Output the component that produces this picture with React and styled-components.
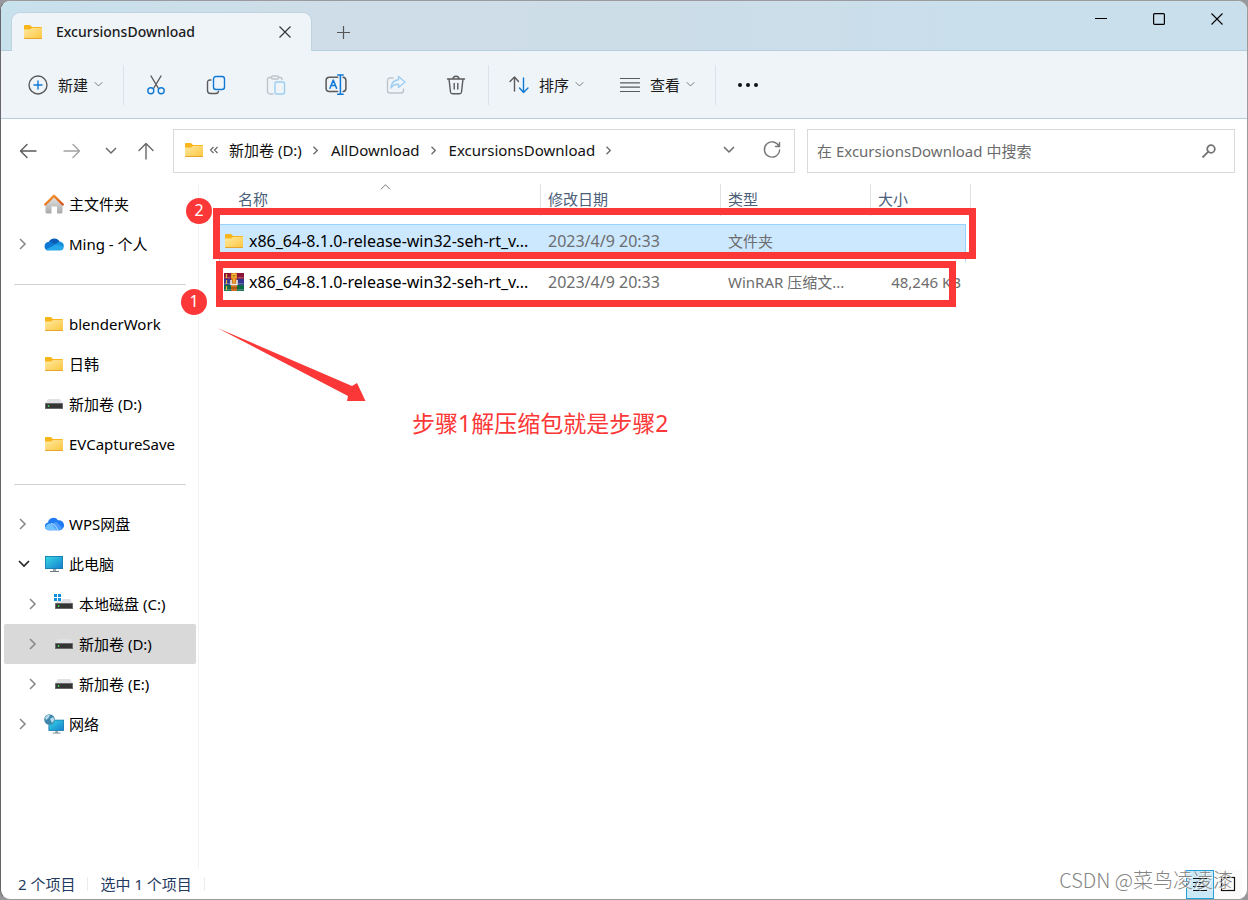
import React from 'react'
import styled, { createGlobalStyle } from 'styled-components'

const GlobalStyle = createGlobalStyle`
    * { box-sizing: border-box; }
    body {
        margin: 0;
        background: #97979b;
        font-family: "Noto Sans", "Noto Sans CJK SC", sans-serif;
        font-size: 15px;
        line-height: 20px;
        color: #000;
    }
    button, input {
        font: inherit;
        color: inherit;
    }
    svg {
        display: block;
        flex: none;
    }
`;

const Window = styled.div`
    display: flex;
    flex-direction: column;
    position: relative;
    min-height: 100vh;
    overflow: hidden;
    background: #fff;
    border: 1px solid #9b9b9e;
    border-left-color: #66666a;
    border-radius: 10px;
`;

const TitleBar = styled.header`
    display: flex;
    height: 50px;
    padding: 0 1px 0 10px;
    background: linear-gradient(90deg, #c7e1ed 0%, #cfdde8 28%, #cddde8 50%, #c9dfec 80%);
    box-shadow: inset 0 -1px #b5cfe0;
`;

const Tab = styled.div`
    display: flex;
    align-items: center;
    width: 301px;
    height: 39px;
    margin-top: 11px;
    padding: 0 9px 0 11px;
    background: #eff4f9;
    border: 1px solid #bfd3e0;
    border-bottom: 0;
    border-radius: 9px 9px 0 0;
`;

const TabTitle = styled.span`
    flex: 1;
    margin-left: 13px;
    font-size: 14px;
    font-weight: 500;
    color: #1b1b1b;
`;

const IconButton = styled.button`
    display: flex;
    align-items: center;
    justify-content: center;
    width: ${p => p.$width}px;
    height: ${p => p.$height || 36}px;
    padding: 0;
    border: 0;
    background: none;
`;

const NewTab = styled.div`
    flex: 1;
    padding: 13px 0 0 13px;
`;

const Toolbar = styled.div`
    display: flex;
    align-items: center;
    height: 68px;
    padding-left: 9px;
    background: #eff4f9;
    border-bottom: 1px solid #b9cddb;
`;

const MenuButton = styled.button`
    display: flex;
    align-items: center;
    height: 40px;
    padding: 0 18px;
    border: 0;
    background: none;
    color: #1b1b1b;
`;

const MenuLabel = styled.span`
    margin: 0 6px 0 10px;
`;

const Separator = styled.span`
    width: 1px;
    height: 40px;
    margin: 0 2px;
    background: #dde3e9;
`;

const NavBar = styled.div`
    display: flex;
    align-items: center;
    padding: 10px 12px 11px 5px;
`;

const Address = styled.nav`
    display: flex;
    flex: 1;
    align-items: center;
    height: 44px;
    margin: 0 12px 0 9px;
    padding: 0 1px 2px 10px;
    border: 1px solid #d9d9d9;
`;

const Crumbs = styled.div`
    display: flex;
    flex: 1;
    align-items: center;
    gap: 10px;
    margin-left: 4px;
`;

const Crumb = styled.a`
    color: #111;
    text-decoration: none;
    white-space: nowrap;
`;

const SearchBox = styled.label`
    display: flex;
    flex: 0 1 428px;
    align-items: center;
    height: 44px;
    padding: 0 17px 0 9px;
    border: 1px solid #d9d9d9;
`;

const SearchInput = styled.input`
    flex: 1;
    min-width: 0;
    padding: 0;
    border: 0;
    outline: 0;
    background: none;
    &::placeholder {
        color: #6b6b6b;
        opacity: 1;
    }
`;

const Body = styled.div`
    display: flex;
    flex: 1;
    position: relative;
`;

const Sidebar = styled.nav`
    flex: 0 0 198px;
    padding: 0 2px 0 3px;
    border-right: 1px solid #f2f2f2;
`;

const TreeItem = styled.a`
    display: flex;
    align-items: center;
    height: 40px;
    padding-left: ${p => (p.$nested ? 24 : 14)}px;
    border-radius: 2px;
    background: ${p => (p.$selected ? '#d9d9d9' : 'transparent')};
    color: #000;
    text-decoration: none;
    white-space: nowrap;
`;

const Toggle = styled.span`
    width: 10px;
    margin-right: 16px;
`;

const TreeLabel = styled.span`
    margin-left: 5px;
`;

const Divider = styled.hr`
    height: 1px;
    margin: 20px 10px 19px;
    border: 0;
    background: #d3d3d3;
`;

const Files = styled.main`
    flex: 1;
    padding-left: 20px;
`;

const Table = styled.table`
    width: 752px;
    table-layout: fixed;
    border-collapse: separate;
    border-spacing: 0;
`;

const Th = styled.th`
    position: relative;
    padding: 0 0 8px;
    font-weight: 400;
    text-align: left;
    color: #4c607a;
`;

const HeadCell = styled.div`
    height: 32px;
    padding: 5px 0 0 ${p => (p.$first ? 19 : 7)}px;
    border-right: 1px solid #e2e2e2;
`;

const SortMark = styled.span`
    position: absolute;
    top: -2px;
    left: 50%;
`;

const Tr = styled.tr`
    --line: ${p => (p.$selected ? '#99d1ff' : 'transparent')};
    --fill: ${p => (p.$selected ? '#cce8ff' : 'transparent')};
`;

// the transparent bottom border leaves a gap under the selection
const Td = styled.td`
    height: 41px;
    padding: 0 5px 2px 7px;
    border: 0 solid var(--line);
    border-top-width: 1px;
    border-bottom: 6px solid transparent;
    background: var(--fill);
    background-clip: padding-box;
    color: #6d6d6d;
    font-size: ${p => (p.$large ? 16 : 15)}px;
    white-space: nowrap;
    text-align: ${p => (p.$right ? 'right' : 'left')};
`;

const NameTd = styled(Td)`
    padding-left: 4px;
    border-left-width: 1px;
    color: #000;
`;

const SizeTd = styled(Td)`
    padding-right: 4px;
    border-right-width: 1px;
`;

const FileName = styled.div`
    display: flex;
    align-items: center;
    gap: 5px;
`;

const StatusBar = styled.footer`
    display: flex;
    align-items: center;
    height: 30px;
    padding: 0 5px 0 17px;
    color: #1f3a5f;
`;

const StatusText = styled.span`
    padding-right: 12px;
    margin-right: 12px;
    border-right: 1px solid #ececec;
    line-height: 14px;
`;

const ViewSwitch = styled.div`
    display: flex;
    margin-left: auto;
`;

const ViewButton = styled.button`
    display: flex;
    align-items: center;
    justify-content: center;
    width: 28px;
    height: 29px;
    padding: 0;
    border: 1px solid ${p => (p.$active ? '#26a0da' : 'transparent')};
    background: ${p => (p.$active ? '#cbe8f6' : '#fbfbfb')};
`;

const Frame = styled.div`
    position: absolute;
    top: ${p => p.$top}px;
    left: ${p => p.$left}px;
    width: ${p => p.$width}px;
    height: ${p => p.$height}px;
    border: 7px solid #fc3737;
`;

const Badge = styled.span`
    position: absolute;
    top: ${p => p.$top}px;
    left: ${p => p.$left}px;
    width: 26px;
    height: 26px;
    border-radius: 50%;
    background: #fc3737;
    color: #fff;
    font-size: 16px;
    line-height: 24px;
    text-align: center;
`;

const Arrow = styled.svg`
    position: absolute;
    top: 142px;
    left: 215px;
`;

const Note = styled.p`
    position: absolute;
    top: 223px;
    left: 411px;
    margin: 0;
    font-size: 23px;
    line-height: 32px;
    color: #fc3737;
`;

const Watermark = styled.span`
    position: absolute;
    right: 14px;
    bottom: 5px;
    font-family: "Noto Sans CJK SC", sans-serif;
    font-size: 20px;
    font-weight: 300;
    line-height: 28px;
    color: #858585;
    text-shadow: 1px 1px #fff;
    pointer-events: none;
`;

const chevrons = {
    right: 'M2 1l5 5-5 5',
    down: 'M1 3l5 5 5-5',
    up: 'M1 8l5-5 5 5',
}

const Chevron = ({ dir = 'right', size = 12, color = '#6b6b6b', width = 1.3 }) => (
    <svg width={size} height={size} viewBox="0 0 12 12" fill="none" stroke={color} strokeWidth={width}>
        <path d={chevrons[dir]}/>
    </svg>
)

const Line = ({ size = 20, color = '#5a5a5a', width = 1.4, children }) => (
    <svg width={size} height={size} viewBox="0 0 20 20" fill="none" stroke={color} strokeWidth={width} strokeLinecap="round" strokeLinejoin="round">
        {children}
    </svg>
)

const Cross = ({ color }) => (
    <svg width="12" height="12" viewBox="0 0 12 12" stroke={color} strokeWidth="1.1">
        <path d="M.5.5l11 11M11.5.5l-11 11"/>
    </svg>
)

const Folder = () => (
    <svg width="20" height="20" viewBox="0 0 20 20">
        <defs>
            <linearGradient id="folder" x1="0" y1="0" x2="1" y2="1">
                <stop offset="0" stopColor="#ffe9a3"/>
                <stop offset="1" stopColor="#fcc63d"/>
            </linearGradient>
        </defs>
        <path d="M1 4q0-1 1-1h5l2 2h9q1 0 1 1v4H1z" fill="#f8b61c"/>
        <path d="M1 7.6h6L9 6h10v10q0 1-1 1H2q-1 0-1-1z" fill="url(#folder)"/>
        <path d="M1 16h18q0 1-1 1H2q-1 0-1-1z" fill="#e5a52d"/>
    </svg>
)

const Drive = ({ system }) => (
    <svg width="20" height="20" viewBox="0 0 20 20">
        <path d="M4 5h12l3 5H1z" fill="#dfe1e4"/>
        <rect x="1" y="9" width="18" height="6" rx=".6" fill="#6a6a6a"/>
        <rect x="2" y="10" width="16" height="4" fill="#353535"/>
        <circle cx="4.6" cy="12" r=".9" fill="#3fe05c"/>
        {system && (
            <g>
                <rect x="-1" y="-1" width="9" height="8" fill="#fff"/>
                <path d="M0 0h3v3H0zM4 0h3v3H4zM0 4h3v3H0zM4 4h3v3H4z" fill="#0f8fe0"/>
            </g>
        )}
    </svg>
)

const Home = () => (
    <svg width="20" height="20" viewBox="0 0 20 20">
        <defs>
            <linearGradient id="wall" x1="0" y1="0" x2="0" y2="1">
                <stop offset="0" stopColor="#e6e6e6"/>
                <stop offset="1" stopColor="#a9a9a9"/>
            </linearGradient>
            <linearGradient id="roof" x1="0" y1="0" x2="1" y2="1">
                <stop offset="0" stopColor="#f8a12b"/>
                <stop offset="1" stopColor="#d8531b"/>
            </linearGradient>
        </defs>
        <path d="M10 2l8.5 8.5V18q0 1.500-1.500 1.500h-4v-7H7.500v7H3Q1.500 19.500 1.500 18v-7.500z" fill="url(#wall)"/>
        <path d="M1.200 10.500L10 1.800l8.800 8.700" fill="none" stroke="url(#roof)" strokeWidth="2.400" strokeLinecap="round" strokeLinejoin="round"/>
    </svg>
)

const OneDrive = () => (
    <svg width="20" height="20" viewBox="0 0 20 20">
        <path d="M4.500 8.500a6 6 0 0 1 11-.9l-5 6.400z" fill="#0a5cb4"/>
        <path d="M4.500 8a4.300 4.300 0 0 0-.5 8.500l9-4.500-4-2.700A6 6 0 0 0 4.500 8z" fill="#0f78d4"/>
        <path d="M10 10.500l5.500-3a4.500 4.500 0 0 1 4.300 5L16 15z" fill="#1490df"/>
        <path d="M1.700 15.500L11 11q2-.8 4 .3l4.800 1.500q0 3.700-3.800 3.700H4q-1.500 0-2.300-1z" fill="#28a8ea"/>
    </svg>
)

const WpsCloud = () => (
    <svg width="20" height="20" viewBox="0 0 20 20">
        <path d="M4 8.500A5.500 5.500 0 0 1 14 6.300a5 5 0 0 1 2 9.900H4.500A3.900 3.900 0 0 1 4 8.500z" fill="#1f7bf4"/>
        <path d="M1 13.500q4-7 9-1.500l3.500 4.200h-9q-3 0-3.500-2.700z" fill="#6fc0ff"/>
        <path d="M8.500 10.500Q12 6 14.500 10l4 4.500q-1 1.700-3 1.700h-2q-2.500-1-5-5.700z" fill="#4a9bff"/>
        <path d="M7 9.500q4 0 7 6.700" fill="none" stroke="#d5ecff" strokeWidth=".8"/>
    </svg>
)

const Screen = () => (
    <>
        <path d="M9 15h3v2.500H9z" fill="#9aa5ad"/>
        <path d="M6 17h9v1H6z" fill="#6c7780"/>
        <rect x="1" y="2" width="18" height="13" fill="#1779ab"/>
        <rect x="1.800" y="2.800" width="16.400" height="11.400" fill="url(#screen)"/>
    </>
)

const ScreenFill = () => (
    <defs>
        <linearGradient id="screen" x1="0" y1="0" x2="1" y2="1">
            <stop offset="0" stopColor="#37d6e4"/>
            <stop offset="1" stopColor="#1680cf"/>
        </linearGradient>
    </defs>
)

const Pc = () => (
    <svg width="20" height="20" viewBox="0 0 20 20">
        <ScreenFill/>
        <Screen/>
    </svg>
)

const Network = () => (
    <svg width="20" height="20" viewBox="0 0 20 20">
        <ScreenFill/>
        <g transform="translate(3.600 4) scale(.86)"><Screen/></g>
        <circle cx="5.500" cy="5.500" r="5.300" fill="#3f88ad"/>
        <path d="M1 3.500Q4 0 6 1L4.500 4 2 6zM6 5l3-2 1.500 3L8 9z" fill="#b8dcea"/>
    </svg>
)

const Archive = () => (
    <svg width="20" height="20" viewBox="0 0 20 20">
        <rect y="1" width="20" height="6" fill="#8d1436"/>
        <rect y="7" width="20" height="6" fill="#34358c"/>
        <rect y="13" width="20" height="6" fill="#0c6b46"/>
        <path d="M13.500 5.800h6M13.500 11.800h6M13.500 17.800h6M.5 5.800h6M.5 11.800h6M.5 17.800h6" stroke="#cfc8d8" strokeWidth=".5"/>
        <path d="M2.500 2v4M2.500 8v4M2.500 14v4" stroke="#e7b43c" strokeWidth="1.200"/>
        <rect x="7" y="1" width="6" height="18" fill="#c9701f"/>
        <path d="M7.500 2.500Q10 0 12.500 2.500V6h-5z" fill="#ffc03e"/>
        <path d="M8.500 3.500h3M8.500 5h3" stroke="#9a4f0e" strokeWidth=".7"/>
        <path d="M7 8v4.500h6V8" fill="none" stroke="#ececec" strokeWidth="1.600"/>
        <path d="M10 6v5" stroke="#f0a030" strokeWidth="2.400"/>
        <path d="M7 16h6" stroke="#8a3f10" strokeWidth=".8"/>
    </svg>
)

const blue = '#0f7ad5'

const tools = [
    ['剪切', (
        <Line>
            <path d="M5 1l7.500 12.500M15 1L7.500 13.500"/>
            <circle cx="4.800" cy="15.700" r="3" stroke={blue}/>
            <circle cx="15.200" cy="15.700" r="3" stroke={blue}/>
        </Line>
    )],
    ['复制', (
        <Line>
            <path d="M5 5H4Q1.500 5 1.500 7.500v8Q1.500 18.500 4.500 18.500h5.500q2 0 2.500-2"/>
            <rect x="7.500" y="1.500" width="11" height="13" rx="2.500" stroke={blue}/>
        </Line>
    )],
    ['粘贴', (
        <Line color="#bfc4c9">
            <path d="M7 19H4Q1.500 19 1.500 16.500V4.500Q1.500 2.500 3.500 2.500H5M12.500 2.500H14q2 0 2 2"/>
            <rect x="5.500" y="1" width="7" height="3" rx="1.200"/>
            <rect x="9" y="7" width="9.500" height="12" rx="1.500" stroke="#9ccdf1"/>
        </Line>
    )],
    ['重命名', (
        <Line size={22}>
            <path d="M11.500 3H4Q1 3 1 6v7q0 3 3 3h7.500M16.500 3q2.500.2 2.500 3v7q0 2.800-2.500 3"/>
            <path d="M4.500 13L7.500 5.500l3 7.500M5.500 10.500h4" stroke={blue}/>
            <path d="M11.500 1h5M11.500 18.500h5M14 1v17.500" stroke={blue}/>
        </Line>
    )],
    ['共享', (
        <Line color="#bfc4c9">
            <path d="M7 3H4Q1.500 3 1.500 5.500v10Q1.500 18 4 18h11q2.500 0 2.500-2.500V14"/>
            <path d="M12.500 1.500L19 7l-6.500 5.500V9.300Q7.500 9 5 13 5.500 5.500 12.500 4.800z" stroke="#9ccdf1"/>
        </Line>
    )],
    ['删除', (
        <Line>
            <path d="M1.500 4h17M7 4q0-2.800 3-2.800T13 4M3 4l1.500 13q.2 1.800 2 1.800h7q1.800 0 2-1.800L17 4M8.200 8.500v5.500M11.800 8.500v5.500"/>
        </Line>
    )],
]

const tree = [
    { label: '主文件夹', icon: <Home/> },
    { label: 'Ming - 个人', icon: <OneDrive/>, toggle: 'right' },
    null,
    { label: 'blenderWork', icon: <Folder/> },
    { label: '日韩', icon: <Folder/> },
    { label: '新加卷 (D:)', icon: <Drive/> },
    { label: 'EVCaptureSave', icon: <Folder/> },
    null,
    { label: 'WPS网盘', icon: <WpsCloud/>, toggle: 'right' },
    { label: '此电脑', icon: <Pc/>, toggle: 'down' },
    { label: '本地磁盘 (C:)', icon: <Drive system/>, toggle: 'right', nested: true },
    { label: '新加卷 (D:)', icon: <Drive/>, toggle: 'right', nested: true, selected: true },
    { label: '新加卷 (E:)', icon: <Drive/>, toggle: 'right', nested: true },
    { label: '网络', icon: <Network/>, toggle: 'right' },
]

const files = [
    { icon: <Folder/>, name: 'x86_64-8.1.0-release-win32-seh-rt_v...', date: '2023/4/9 20:33', type: '文件夹', size: '', selected: true },
    { icon: <Archive/>, name: 'x86_64-8.1.0-release-win32-seh-rt_v...', date: '2023/4/9 20:33', type: 'WinRAR 压缩文...', size: '48,246 KB' },
]

const Menu = ({ icon, label }) => (
    <MenuButton>
        {icon}
        <MenuLabel>{label}</MenuLabel>
        <Chevron dir="down" size={9} color="#777"/>
    </MenuButton>
)

export default () => {
    return (
        <Window>
            <GlobalStyle/>
            <TitleBar>
                <Tab>
                    <Folder/>
                    <TabTitle>ExcursionsDownload</TabTitle>
                    <IconButton $width={34} aria-label="关闭标签页"><Cross color="#333"/></IconButton>
                </Tab>
                <NewTab>
                    <IconButton $width={36} aria-label="新标签页">
                        <svg width="13" height="13" viewBox="0 0 13 13" stroke="#555" strokeWidth="1.200"><path d="M0 6.500h13M6.500 0v13"/></svg>
                    </IconButton>
                </NewTab>
                <IconButton $width={58} aria-label="最小化">
                    <svg width="12" height="12" viewBox="0 0 12 12" stroke="#000"><path d="M0 5.500h12"/></svg>
                </IconButton>
                <IconButton $width={58} aria-label="最大化">
                    <svg width="12" height="12" viewBox="0 0 12 12" fill="none" stroke="#000" strokeWidth="1.200"><rect x=".6" y=".6" width="10.800" height="10.800" rx="1"/></svg>
                </IconButton>
                <IconButton $width={58} aria-label="关闭"><Cross color="#000"/></IconButton>
            </TitleBar>

            <Toolbar>
                <Menu label="新建" icon={<Line><circle cx="10" cy="10" r="9"/><path d="M10 6v8M6 10h8" stroke={blue}/></Line>}/>
                <Separator/>
                {tools.map(([label, icon]) => (
                    <IconButton key={label} $width={60} aria-label={label}>{icon}</IconButton>
                ))}
                <Separator/>
                <Menu label="排序" icon={<Line><path d="M5.500 16V2M1 6.500L5.500 2 9.500 6.500"/><path d="M14.500 3v14.500M10.500 13l4 4.500L19 13" stroke={blue}/></Line>}/>
                <Menu label="查看" icon={<Line width={1.2}><path d="M.5 3.500h19M.5 7.800h19M.5 12.200h19M.5 16.500h19"/></Line>}/>
                <Separator/>
                <IconButton $width={60} aria-label="更多">
                    <svg width="22" height="6" viewBox="0 0 22 6" fill="#111"><circle cx="3" cy="3" r="2"/><circle cx="11" cy="3" r="2"/><circle cx="19" cy="3" r="2"/></svg>
                </IconButton>
            </Toolbar>

            <NavBar>
                <IconButton $width={44} aria-label="后退"><Line><path d="M2.500 10h15.500M9 3.500L2.500 10 9 16.500"/></Line></IconButton>
                <IconButton $width={44} aria-label="前进"><Line color="#a3a3a3"><path d="M2 10h15.500M11 3.500l6.500 6.500-6.500 6.500"/></Line></IconButton>
                <IconButton $width={34} aria-label="最近位置"><Chevron dir="down" width={1.5}/></IconButton>
                <IconButton $width={36} aria-label="向上"><Line color="#666"><path d="M10 18V2.500M3 9.500l7-7 7 7"/></Line></IconButton>
                <Address aria-label="地址">
                    <Folder/>
                    <Crumbs>
                        <svg width="11" height="10" viewBox="0 0 11 10" fill="none" stroke="#666" strokeWidth="1.200"><path d="M5.500 2L2.500 5l3 3M9.500 2l-3 3 3 3"/></svg>
                        <Crumb href="#d">新加卷 (D:)</Crumb>
                        <Chevron size={9} width={1.8}/>
                        <Crumb href="#all">AllDownload</Crumb>
                        <Chevron size={9} width={1.8}/>
                        <Crumb href="#excursions">ExcursionsDownload</Crumb>
                        <Chevron size={9} width={1.8}/>
                    </Crumbs>
                    <IconButton $width={44} aria-label="历史记录"><Chevron dir="down" width={1.5}/></IconButton>
                    <IconButton $width={42} aria-label="刷新">
                        <Line color="#777"><path d="M17 6.500A7.600 7.600 0 1 0 17.600 10M17.500 2.500v4h-4"/></Line>
                    </IconButton>
                </Address>
                <SearchBox>
                    <SearchInput type="text" aria-label="搜索" placeholder="在 ExcursionsDownload 中搜索"/>
                    <svg width="16" height="16" viewBox="0 0 16 16" fill="none" stroke="#757575" strokeWidth="1.800"><circle cx="10" cy="6" r="3.800"/><path d="M7.300 8.700L1.500 14.500"/></svg>
                </SearchBox>
            </NavBar>

            <Body>
                <Sidebar aria-label="导航窗格">
                    {tree.map((item, i) => item ? (
                        <TreeItem key={i} href={'#item' + i} $nested={item.nested} $selected={item.selected}>
                            <Toggle>
                                {item.toggle && <Chevron dir={item.toggle} width={1.6} color={item.toggle === 'down' ? '#222' : '#8a8a8a'}/>}
                            </Toggle>
                            {item.icon}
                            <TreeLabel>{item.label}</TreeLabel>
                        </TreeItem>
                    ) : <Divider key={i}/>)}
                </Sidebar>
                <Files>
                    <Table>
                        <colgroup>
                            <col width="322"/>
                            <col width="180"/>
                            <col width="150"/>
                            <col width="95"/>
                            <col width="5"/>
                        </colgroup>
                        <thead>
                            <tr>
                                <Th>
                                    <HeadCell $first>名称</HeadCell>
                                    <SortMark><Chevron dir="up" size={11} width={1}/></SortMark>
                                </Th>
                                <Th><HeadCell>修改日期</HeadCell></Th>
                                <Th><HeadCell>类型</HeadCell></Th>
                                <Th colSpan={2}><HeadCell>大小</HeadCell></Th>
                            </tr>
                        </thead>
                        <tbody>
                            {files.map(file => (
                                <Tr key={file.type} $selected={file.selected}>
                                    <NameTd $large><FileName>{file.icon}{file.name}</FileName></NameTd>
                                    <Td $large>{file.date}</Td>
                                    <Td>{file.type}</Td>
                                    <SizeTd $right>{file.size}</SizeTd>
                                </Tr>
                            ))}
                        </tbody>
                    </Table>
                </Files>

                <Frame $top={24} $left={212} $width={763} $height={51}/>
                <Frame $top={77} $left={215} $width={740} $height={46}/>
                <Badge $top={14} $left={185}>2</Badge>
                <Badge $top={105} $left={180}>1</Badge>
                <Arrow width="150" height="78" viewBox="0 0 150 78" fill="#fc3737">
                    <path d="M1.500 2L136 60l5-3 8.500 18H131l1-5z"/>
                </Arrow>
                <Note>步骤1解压缩包就是步骤2</Note>
            </Body>

            <StatusBar>
                <StatusText>2 个项目</StatusText>
                <StatusText>选中 1 个项目</StatusText>
                <ViewSwitch>
                    <ViewButton $active aria-label="详细信息">
                        <svg width="16" height="16" viewBox="0 0 16 16" stroke="#111"><path d="M1 2.500h14M1 6.500h14M1 10.500h14M1 14.500h14"/></svg>
                    </ViewButton>
                    <ViewButton aria-label="大图标">
                        <svg width="16" height="16" viewBox="0 0 16 16" fill="none" stroke="#111" strokeWidth="1.200"><rect x="1.500" y="1.500" width="13" height="13"/></svg>
                    </ViewButton>
                </ViewSwitch>
            </StatusBar>
            <Watermark>CSDN @菜鸟凌凌漆</Watermark>
        </Window>
    )
}
